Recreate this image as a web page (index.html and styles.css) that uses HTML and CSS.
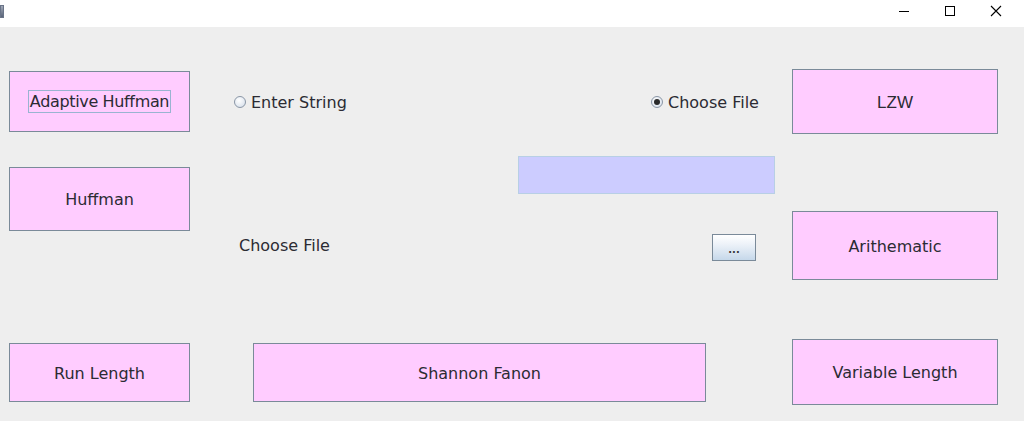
FILE: index.html
```html
<!DOCTYPE html>
<html>
<head>
<meta charset="utf-8">
<link rel="stylesheet" href="styles.css">
</head>
<body>
<div class="window">
  <div class="titlebar">
    <div class="app-icon"></div>
    <div class="controls">
      <svg class="ctl" width="46" height="27" viewBox="0 0 46 27"><line x1="18" y1="11.5" x2="28" y2="11.5" stroke="#000" stroke-width="1"/></svg>
      <svg class="ctl" width="46" height="27" viewBox="0 0 46 27"><rect x="18.5" y="6.5" width="9" height="9" fill="none" stroke="#000" stroke-width="1"/></svg>
      <svg class="ctl" width="46" height="27" viewBox="0 0 46 27"><path d="M18 6 L28 16 M28 6 L18 16" stroke="#000" stroke-width="1.1" fill="none"/></svg>
    </div>
  </div>
  <div class="content">
    <div class="col-left">
      <div class="btn btn-adaptive"><span class="focus">Adaptive Huffman</span></div>
      <div class="btn btn-huffman">Huffman</div>
      <div class="btn btn-run">Run Length</div>
    </div>
    <div class="col-mid">
      <div class="radio-row">
        <label class="radio"><span class="radio-dot"></span>Enter String</label>
        <label class="radio"><span class="radio-dot checked"></span>Choose File</label>
      </div>
      <div class="textfield"></div>
      <div class="file-row">
        <span class="file-label">Choose File</span>
        <div class="browse">...</div>
      </div>
      <div class="btn btn-shannon">Shannon Fanon</div>
    </div>
    <div class="col-right">
      <div class="btn btn-lzw">LZW</div>
      <div class="btn btn-arith">Arithematic</div>
      <div class="btn btn-var">Variable Length</div>
    </div>
  </div>
</div>
</body>
</html>
```
FILE: styles.css
```css
* { box-sizing: border-box; }
html, body { margin: 0; padding: 0; background: #ffffff; }
body {
  font-family: "DejaVu Sans", Tahoma, sans-serif;
  font-size: 16px;
  color: #2b2b33;
}
.window { width: 1024px; height: 421px; overflow: hidden; }
.titlebar {
  height: 27px;
  background: #ffffff;
  display: flex;
  justify-content: space-between;
}
.app-icon {
  width: 4px; height: 13px; margin-top: 5px;
  background: linear-gradient(#a0a8b8, #5a6478);
  border: 1px solid #6a7488;
}
.controls { display: flex; padding-right: 5px; }
.ctl { display: block; }
.content {
  height: 394px;
  background: #eeeeee;
  display: flex;
  padding-left: 9px;
}
.btn {
  display: flex;
  align-items: center;
  justify-content: center;
  background: #ffccff;
  border: 1px solid #7a8a99;
  padding-top: 1px;
}
.col-left { width: 181px; display: flex; flex-direction: column; }
.btn-adaptive { margin-top: 44px; height: 61px; padding-top: 0; }
.btn-huffman { margin-top: 35px; height: 64px; padding-top: 0; }
.btn-run { margin-top: 112px; height: 59px; padding-top: 2px; }
.focus {
  border: 1px solid #99b4d1;
  padding: 0 1px;
  line-height: 21px;
  letter-spacing: -0.35px;
}

.col-mid { width: 602px; display: flex; flex-direction: column; }
.radio-row {
  margin-top: 65px;
  height: 20px;
  display: grid;
  grid-template-columns: 417px auto;
  padding-left: 44px;
  align-items: center;
}
.radio { display: flex; align-items: center; gap: 5px; }
.radio-dot {
  width: 12px; height: 12px; border-radius: 50%;
  border: 1px solid #8a96a6;
  background: radial-gradient(circle at 40% 35%, #ffffff, #dfe6ef 70%, #c8d4e2);
  display: flex; align-items: center; justify-content: center;
}
.radio-dot.checked::after {
  content: ""; width: 6px; height: 6px; border-radius: 50%;
  background: #2a2a2a;
}
.textfield {
  margin-top: 44px;
  margin-left: 328px;
  width: 257px;
  height: 38px;
  background: #ccccff;
  border: 1px solid #b8cfe5;
}
.file-row {
  margin-top: 40px;
  height: 27px;
  display: grid;
  grid-template-columns: 473px 44px;
  padding-left: 49px;
  align-items: center;
}
.file-label { margin-bottom: 4px; }
.browse {
  height: 27px;
  border: 1px solid #7a8a99;
  background: linear-gradient(#ffffff, #eef3f9 35%, #c6d8ea);
  font-size: 10px;
  font-weight: bold;
  display: flex;
  align-items: flex-end;
  justify-content: center;
  padding-bottom: 5px;
  line-height: 1;
  color: #3a3a3a;
}
.btn-shannon { margin-top: 82px; margin-left: 63px; width: 453px; height: 59px; padding-top: 2px; }

.col-right { width: 206px; display: flex; flex-direction: column; }
.btn-lzw {
  margin-top: 42px; height: 65px;
  font-family: "Liberation Sans", Arial, sans-serif;
  font-size: 17px;
  padding-top: 2px;
}
.btn-arith { margin-top: 77px; height: 69px; }
.btn-var { margin-top: 59px; height: 66px; }
```
